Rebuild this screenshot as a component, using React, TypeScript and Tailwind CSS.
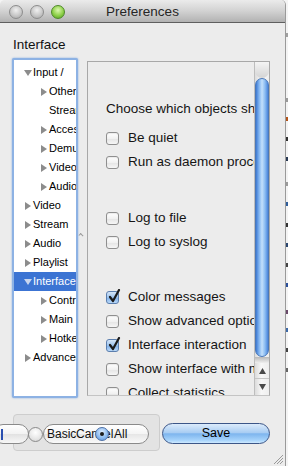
import React from "react";

type TreeItem = { label: string; level: 0 | 1; arrow?: "right" | "down"; selected?: boolean };

const treeItems: TreeItem[] = [
  { label: "Input /", level: 0, arrow: "down" },
  { label: "Other codecs", level: 1, arrow: "right" },
  { label: "Stream filters", level: 1 },
  { label: "Access modules", level: 1, arrow: "right" },
  { label: "Demuxers", level: 1, arrow: "right" },
  { label: "Video codecs", level: 1, arrow: "right" },
  { label: "Audio codecs", level: 1, arrow: "right" },
  { label: "Video", level: 0, arrow: "right" },
  { label: "Stream", level: 0, arrow: "right" },
  { label: "Audio", level: 0, arrow: "right" },
  { label: "Playlist", level: 0, arrow: "right" },
  { label: "Interface", level: 0, arrow: "down", selected: true },
  { label: "Control interfaces", level: 1, arrow: "right" },
  { label: "Main interfaces", level: 1, arrow: "right" },
  { label: "Hotkeys settings", level: 1, arrow: "right" },
  { label: "Advanced", level: 0, arrow: "right" },
];

const options = [
  { label: "Be quiet" },
  { label: "Run as daemon process" },
  { gap: 32 },
  { label: "Log to file" },
  { label: "Log to syslog" },
  { gap: 31 },
  { label: "Color messages", checked: true },
  { label: "Show advanced options" },
  { label: "Interface interaction", checked: true },
  { label: "Show interface with mouse" },
  { label: "Collect statistics" },
];

function Arrow({ dir, light }: { dir: "right" | "down"; light?: boolean }) {
  const fill = light ? "#c9d6ee" : "#8c8c8c";
  return dir === "right" ? (
    <svg width="6" height="8" viewBox="0 0 6 8">
      <path d="M0 0 L6 4 L0 8 Z" fill={fill} />
    </svg>
  ) : (
    <svg width="8" height="6" viewBox="0 0 8 6">
      <path d="M0 0 L8 0 L4 6 Z" fill={fill} />
    </svg>
  );
}

function Checkbox({ checked }: { checked?: boolean }) {
  return checked ? (
    <div className="relative h-[13px] w-[13px] shrink-0 rounded-[3px] border border-[#5c7fae] bg-[linear-gradient(to_bottom,#d6e6f8,#9cc3ee_50%,#7fb0ea_51%,#b9d8f8)]">
      <svg className="absolute -top-[3px] left-[1px]" width="13" height="14" viewBox="0 0 13 14">
        <path d="M2 8 L5 12 L11 1" fill="none" stroke="#1b1b1b" strokeWidth="2.2" strokeLinecap="round" strokeLinejoin="round" />
      </svg>
    </div>
  ) : (
    <div className="h-[13px] w-[13px] shrink-0 rounded-[3px] border border-[#8f8f8f] bg-[linear-gradient(to_bottom,#ffffff,#f1f1f1_50%,#e4e4e4_51%,#f6f6f6)] shadow-[inset_0_1px_1px_rgba(0,0,0,0.08)]" />
  );
}

function Light({ green }: { green?: boolean }) {
  return green ? (
    <div className="h-[14px] w-[14px] rounded-full border border-[#4f8a2a] bg-[radial-gradient(circle_at_50%_35%,#dcf8b0,#8ed049_55%,#4f9a1f)]" />
  ) : (
    <div className="h-[14px] w-[14px] rounded-full border border-[#8d8d8d] bg-[radial-gradient(circle_at_50%_35%,#f0f0f0,#c8c8c8_55%,#a4a4a4)]" />
  );
}

const stripMarks = [
  { y: 33, c: "#a0a0a0" },
  { y: 98, c: "#9a9a9a" },
  { y: 117, c: "#b4541a" },
  { y: 137, c: "#333" },
  { y: 157, c: "#2a3a54" },
  { y: 182, c: "#9a9a9a" },
  { y: 202, c: "#2f5d9a" },
  { y: 223, c: "#333" },
  { y: 243, c: "#2a4670" },
  { y: 263, c: "#444" },
  { y: 283, c: "#2a4f9a" },
  { y: 310, c: "#6a4a6a" },
  { y: 328, c: "#3d6aa8" },
  { y: 348, c: "#444" },
  { y: 368, c: "#666" },
];

export default function App() {
  return (
    <div className="flex h-[466px] w-[288px] overflow-hidden bg-[#f4f4f4] font-['Liberation_Sans',Arial,sans-serif] text-[#111]">
      <div className="flex h-full w-[286px] shrink-0 flex-col rounded-t-[5px] border-r border-[#9a9a9a] bg-[#ececec]">
        {/* title bar */}
        <div className="grid h-[23px] shrink-0 grid-cols-[1fr_auto_1fr] items-center rounded-t-[5px] border-b border-[#5f5f5f] bg-[linear-gradient(to_bottom,#ebebeb,#d2d2d2_50%,#b2b2b2)]">
          <div className="flex items-center gap-[7px] pl-[9px] pt-[2px]">
            <Light />
            <Light />
            <Light green />
          </div>
          <div className="pt-[2px] text-[13.5px] text-[#262626]">Preferences</div>
          <div />
        </div>

        {/* body */}
        <div className="relative flex flex-1 flex-col">
          <div className="ml-[13px] mt-[14px] h-[16px] text-[13.5px] leading-[16px]">Interface</div>

          <div className="mt-[5px] flex items-start">
            {/* tree */}
            <div className="ml-[12px] h-[340px] w-[66px] shrink-0 overflow-hidden rounded-[2px] border-2 border-[#8db2e4] bg-white pt-[3px] shadow-[0_0_2px_#7ea8df]">
              {treeItems.map((it, i) => (
                <div
                  key={i}
                  className={`flex h-[19px] items-center whitespace-nowrap text-[11px] ${
                    it.selected ? "bg-[#3c74d3] text-white" : "text-black"
                  } ${it.level === 0 ? "pl-[8px]" : "pl-[24px]"}`}
                >
                  <div className="flex w-[11px] shrink-0 items-center justify-center">
                    {it.arrow && <Arrow dir={it.arrow} light={it.selected} />}
                  </div>
                  <span>{it.label}</span>
                </div>
              ))}
            </div>

            {/* splitter */}
            <div className="w-[9px] shrink-0">
              <div className="ml-[1px] mt-[176px] h-[3px] w-[4px] rotate-45 border-l border-t border-[#9a9a9a]" />
            </div>

            {/* options panel */}
            <div className="mt-[3px] flex h-[335px] w-[183px] shrink-0 border border-[#a8a8a8] border-b-[#c4c4c4]">
              <div className="flex-1 overflow-hidden pl-[18px] pt-[35px] text-[13.5px] text-[#151515]">
                <div className="flex h-[24px] items-center whitespace-nowrap">Choose which objects should be shown</div>
                <div className="mt-[5px]">
                  {options.map((o, i) =>
                    o.gap ? (
                      <div key={i} style={{ height: o.gap }} />
                    ) : (
                      <div key={i} className="flex h-[24px] items-center gap-[9px] whitespace-nowrap">
                        <Checkbox checked={o.checked} />
                        <span>{o.label}</span>
                      </div>
                    )
                  )}
                </div>
              </div>

              {/* scrollbar */}
              <div className="flex w-[15px] shrink-0 flex-col border-l border-[#bdbdbd] bg-[linear-gradient(to_right,#dcdcdc,#f7f7f7_45%,#eeeeee)]">
                <div className="h-[16px] shrink-0 rounded-b-full bg-[linear-gradient(to_bottom,#f4f4f4,#d4d4d4)]" />
                <div className="flex-1 rounded-full border border-[#4a78b8] bg-[linear-gradient(to_right,#3d79d2,#7fb3f0_25%,#c4e0fb_50%,#8bbcf2_75%,#4a84da)]" />
                <div className="h-[6px] shrink-0 bg-[linear-gradient(to_bottom,#b9b9b9,#efefef)]" />
                <div className="flex h-[16px] shrink-0 items-center justify-center border-b border-[#c6c6c6]">
                  <svg width="7" height="6" viewBox="0 0 7 6">
                    <path d="M3.5 0 L7 6 L0 6 Z" fill="#4a4a4a" />
                  </svg>
                </div>
                <div className="flex h-[16px] shrink-0 items-center justify-center">
                  <svg width="7" height="6" viewBox="0 0 7 6">
                    <path d="M0 0 L7 0 L3.5 6 Z" fill="#4a4a4a" />
                  </svg>
                </div>
              </div>
            </div>
          </div>

          {/* bottom controls */}
          <div className="mt-[16px] flex items-start">
            <div className="relative ml-[13px] h-[37px] w-[147px] shrink-0 rounded-[4px] border border-[#cdcdcd] bg-[#e3e3e3]">
              <div className="absolute left-[-21px] top-[9px] h-[20px] w-[36px] rounded-full border border-[#8a8a8a] bg-[linear-gradient(to_bottom,#ffffff,#f2f2f2_50%,#e2e2e2_51%,#f7f7f7)]" />
              <div className="absolute left-[-13px] top-[14px] h-[11px] w-[2px] bg-[#2a4fb0]" />
              <div className="absolute left-[14px] top-[12px] h-[15px] w-[15px] rounded-full border border-[#8a8a8a] bg-[radial-gradient(circle_at_50%_35%,#ffffff,#e6e6e6_60%,#cfcfcf)]" />
              <div className="absolute left-[29px] top-[9px] h-[20px] w-[106px] rounded-full border border-[#8a8a8a] bg-[linear-gradient(to_bottom,#ffffff,#f4f4f4_50%,#e6e6e6_51%,#f9f9f9)]" />
              <span className="absolute left-[33px] top-[12px] text-[12px] leading-[14px]">Basic</span>
              <span className="absolute left-[62px] top-[12px] text-[12px] leading-[14px]">Cancel</span>
              <div className="absolute left-[81px] top-[12px] flex h-[14px] w-[14px] items-center justify-center rounded-full border border-[#4c6fa6] bg-[radial-gradient(circle_at_50%_35%,#e2efff,#8ebcf0_55%,#5b92dc)]">
                <div className="h-[4px] w-[4px] rounded-full bg-[#1c1c1c]" />
              </div>
              <span className="absolute left-[100px] top-[12px] text-[12px] leading-[14px]">All</span>
            </div>
            <div className="ml-[2px] mt-[9px] flex h-[21px] w-[108px] shrink-0 items-center justify-center rounded-full border border-[#3c5688] bg-[linear-gradient(to_bottom,#dcebfb,#a9cdf3_45%,#7eb5ee_52%,#a6d3fb_85%,#cde9ff)] text-[12.5px] text-black">
              Save
            </div>
          </div>

          {/* resize grip */}
          <svg className="absolute bottom-[1px] right-[1px]" width="11" height="11" viewBox="0 0 11 11">
            <path d="M1 10 L10 1 M4 10 L10 4 M7 10 L10 7" stroke="#9a9a9a" strokeWidth="1" />
          </svg>
        </div>
      </div>

      {/* background strip behind the window */}
      <div className="relative w-[2px] shrink-0 bg-[#f4f4f4]">
        {stripMarks.map((m, i) => (
          <div key={i} className="absolute left-0 h-[4px] w-[2px]" style={{ top: m.y, backgroundColor: m.c }} />
        ))}
      </div>
    </div>
  );
}
